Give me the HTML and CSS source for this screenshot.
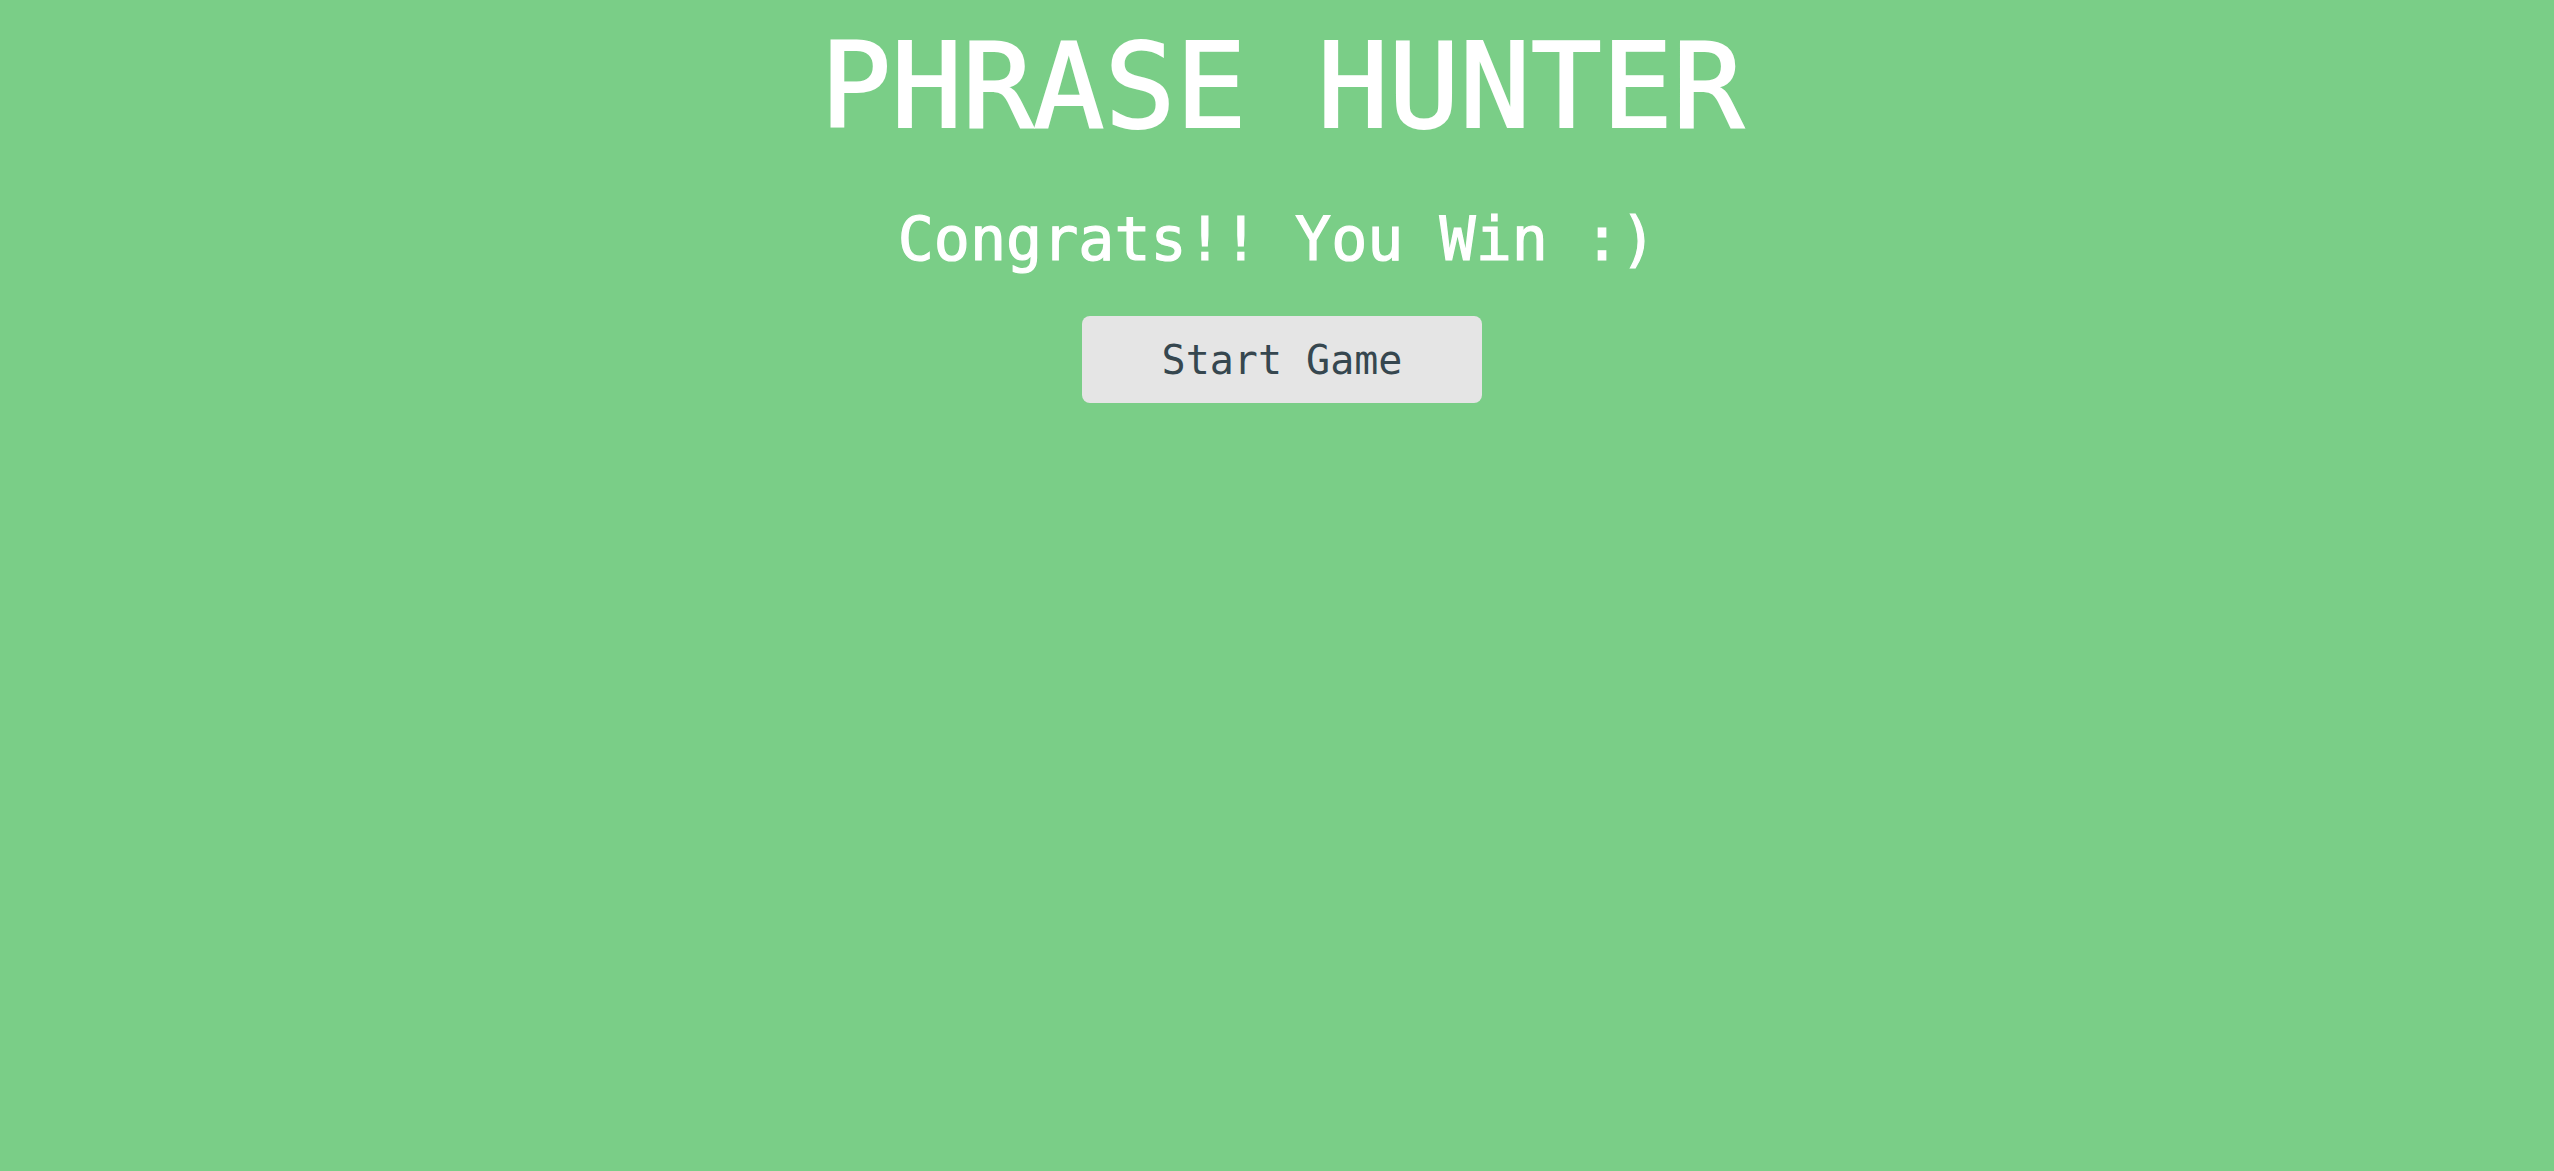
FILE: index.html
```html
<!DOCTYPE html>
<html lang="en">
<head>
<meta charset="utf-8">
<title>Phrase Hunter</title>
<link rel="stylesheet" href="styles.css">
</head>
<body>
  <div class="overlay win">
    <h2 class="title">Phrase Hunter</h2>
    <h1 class="game-over-message">Congrats!! You Win :)</h1>
    <button class="btn-reset">Start Game</button>
  </div>
</body>
</html>
```
FILE: styles.css
```css
html, body {
  margin: 0;
  padding: 0;
  height: 100%;
}
body {
  background: #7ace87;
  font-family: "DejaVu Sans Mono", "Liberation Mono", monospace;
}
.overlay {
  display: flex;
  flex-direction: column;
  align-items: center;
  padding-top: 26px;
}
.title {
  margin: 0;
  color: #ffffff;
  text-transform: uppercase;
  font-weight: 400;
  font-size: 118px;
  line-height: 120px;
  padding-left: 10px;
  -webkit-text-stroke: 2px #ffffff;
}
.game-over-message {
  margin: 63px 0 0 0;
  color: #ffffff;
  font-weight: 400;
  font-size: 60px;
  line-height: 61px;
  -webkit-text-stroke: 1.2px #ffffff;
}
.btn-reset {
  margin-top: 46px;
  width: 400px;
  height: 87px;
  border: none;
  border-radius: 8px;
  background: #e5e5e5;
  color: #36474f;
  font-family: "DejaVu Sans Mono", "Liberation Mono", monospace;
  font-size: 40px;
  display: flex;
  align-items: center;
  justify-content: center;
  padding: 0;
  margin-left: 10px;
}
```
